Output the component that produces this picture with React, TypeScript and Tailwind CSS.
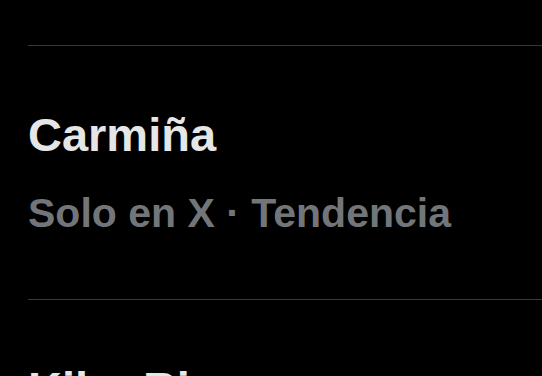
const trends = [
  { title: "Carmiña", meta: "Solo en X · Tendencia" },
  { title: "Kiko Rivera", meta: "Tendencia en España" },
];

export default function App() {
  return (
    <div className="h-screen w-full overflow-hidden bg-black font-['Liberation_Sans',Arial,sans-serif]">
      <div className="h-[45px]" />
      <ul className="pl-[28px]">
        {trends.map((t) => (
          <li key={t.title} className="border-t border-[#38393b] pt-[61px] pb-[62px]">
            <div className="text-[47px] leading-[56px] font-bold text-[#e4e6e7]">{t.title}</div>
            <div className="mt-[26px] text-[41px] leading-[48px] font-bold text-[#72767a]">{t.meta}</div>
          </li>
        ))}
      </ul>
    </div>
  );
}
